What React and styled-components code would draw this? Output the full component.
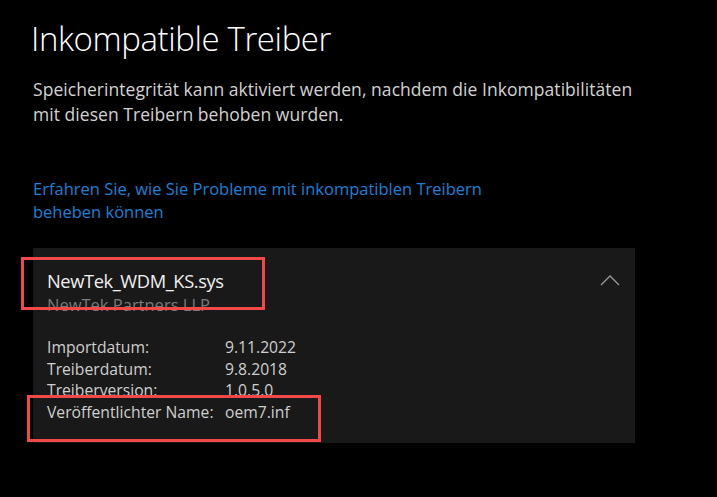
import styled, { createGlobalStyle } from 'styled-components'

const Global = createGlobalStyle`
html,body{margin:0;padding:0;background:#000;}
body{font-family:"Open Sans","Noto Sans",sans-serif;}
`

const details = [
    ['Importdatum:', '9.11.2022'],
    ['Treiberdatum:', '9.8.2018'],
    ['Treiberversion:', '1.0.5.0'],
    ['Veröffentlichter Name:', 'oem7.inf'],
]

export default function App(){
    return (
        <Seite>
            <Global/>
            <Titel>Inkompatible Treiber</Titel>
            <Beschreibung>
                Speicherintegrität kann aktiviert werden, nachdem die Inkompatibilitäten
                <br/>mit diesen Treibern behoben wurden.
            </Beschreibung>
            <Link href="#">
                Erfahren Sie, wie Sie Probleme mit inkompatiblen Treibern
                <br/>beheben können
            </Link>
            <Karte>
                <Kopf>
                    <div>
                        <Name>NewTek_WDM_KS.sys</Name>
                        <Anbieter>NewTek Partners LLP</Anbieter>
                    </div>
                    <Pfeil width="20" height="11" viewBox="0 0 20 11">
                        <path d="M1 10 L10 1 L19 10" fill="none" stroke="#9a9a9a" strokeWidth="1.3"/>
                    </Pfeil>
                </Kopf>
                <Tabelle>
                    {details.map(([k,v])=>(
                        <Zeile key={k}>
                            <span>{k}</span>
                            <span>{v}</span>
                        </Zeile>
                    ))}
                </Tabelle>
                <Markierung $left={-12} $top={9} $w={244} $h={53}/>
                <Markierung $left={-6} $top={147} $w={294} $h={47}/>
            </Karte>
        </Seite>
    )
}

const Seite=styled.div`
padding:17px 0 40px 33px;
min-height:100vh;
box-sizing:border-box;
background:#000;
`
const Titel=styled.h1`
margin:0 0 0 -2px;
font-weight:300;
font-size:33px;
line-height:44px;
color:#fff;
letter-spacing:-0.4px;
`
const Beschreibung=styled.p`
margin:16px 0 0 0;
font-size:17.5px;
line-height:25px;
color:#d2d2d2;
letter-spacing:0.05px;
`
const Link=styled.a`
display:block;
margin-top:50px;
font-size:16.5px;
line-height:23px;
color:#1a80d6;
text-decoration:none;
`
const Karte=styled.div`
position:relative;
margin-top:25px;
width:602px;
height:195px;
background:#191919;
box-sizing:border-box;
padding:20px 14px 0 14px;
`
const Kopf=styled.div`
display:flex;
justify-content:space-between;
align-items:flex-start;
`
const Name=styled.div`
font-size:18.3px;
line-height:26px;
color:#f0f0f0;
letter-spacing:-0.4px;
`
const Anbieter=styled.div`
margin-top:1px;
font-size:16.5px;
line-height:20px;
color:#7a7a7a;
`
const Pfeil=styled.svg`
margin:6.5px 1.5px 0 0;
`
const Tabelle=styled.div`
margin-top:22px;
display:flex;
flex-direction:column;
`
const Zeile=styled.div`
display:grid;
grid-template-columns:178px auto;
font-size:15.7px;
line-height:21.7px;
color:#cfcfcf;
`
const Markierung=styled.div`
position:absolute;
left:${p=>p.$left}px;
top:${p=>p.$top}px;
width:${p=>p.$w}px;
height:${p=>p.$h}px;
border:3px solid #f24848;
box-sizing:border-box;
pointer-events:none;
`
